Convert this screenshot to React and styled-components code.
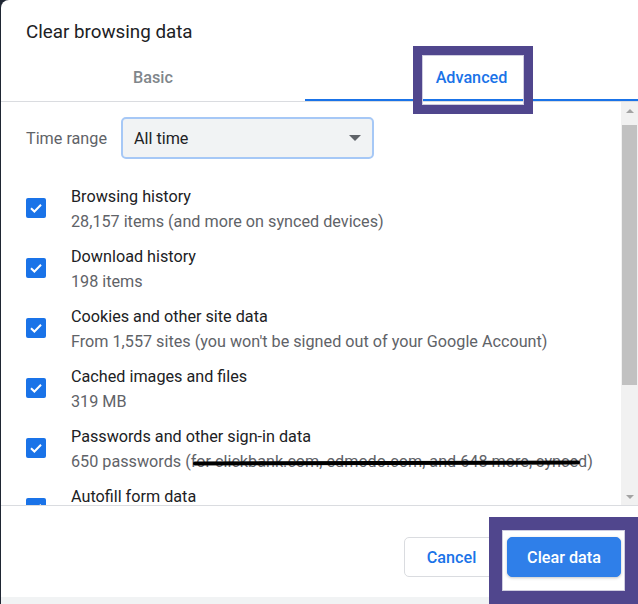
import React from 'react';
import styled, {createGlobalStyle} from 'styled-components';

const Global = createGlobalStyle`
  html, body { margin: 0; padding: 0; background: #1f2633; }
  body { font-family: Roboto, "Liberation Sans", sans-serif; }
`

const Page = styled.div`
  position: relative;
  width: 638px;
  height: 604px;
  overflow: hidden;
`

const Dialog = styled.div`
  display: flex;
  flex-direction: column;
  height: 604px;
  margin-left: 1px;
  background: #fff;
  border-radius: 8px 0 0 0;
`

const Title = styled.h1`
  margin: 0;
  padding: 20px 0 0 25px;
  height: 24px;
  line-height: 24px;
  font-size: 18.8px;
  font-weight: 400;
  color: #202124;
`

const TabBar = styled.div`
  display: flex;
  margin-top: 12px;
  border-bottom: 1px solid #dadce0;
`

const Tab = styled.div`
  flex: ${p => (p.$active ? 1 : '0 0 304px')};
  height: 43px;
  display: flex;
  align-items: center;
  justify-content: center;
  font-size: 16.2px;
  font-weight: 500;
  color: ${p => (p.$active ? '#1a73e8' : '#80868b')};
  border-bottom: 2px solid ${p => (p.$active ? '#1a73e8' : 'transparent')};
`

const Content = styled.div`
  flex: 1;
  min-height: 0;
  display: flex;
`

const List = styled.div`
  flex: 1;
  overflow: hidden;
  padding: 15px 0 0 25px;
`

const TimeRow = styled.div`
  display: flex;
  align-items: center;
  gap: 14px;
  margin-bottom: 24px;
`

const Label = styled.span`
  font-size: 16.2px;
  color: #5f6368;
`

const Select = styled.div`
  box-sizing: border-box;
  width: 253px;
  height: 42px;
  display: flex;
  align-items: center;
  justify-content: space-between;
  padding: 0 11px 0 11px;
  background: #f1f3f4;
  border: 2px solid #a6c8f6;
  border-radius: 5px;
  font-size: 16.2px;
  color: #202124;
`

const Caret = styled.span`
  width: 0;
  height: 0;
  border-left: 6px solid transparent;
  border-right: 6px solid transparent;
  border-top: 6px solid #5f6368;
`

const Rows = styled.div`
  display: flex;
  flex-direction: column;
  gap: 10px;
`

const Row = styled.div`
  display: flex;
  align-items: center;
  gap: 25px;
`

const Box = styled.div`
  flex: none;
  width: 20px;
  height: 20px;
  border-radius: 2px;
  background: #1a73e8;
  display: flex;
  align-items: center;
  justify-content: center;
`

const Texts = styled.div`
  display: flex;
  flex-direction: column;
  height: 50px;
  padding-top: 1px;
  box-sizing: border-box;
`

const ItemTitle = styled.div`
  flex: none;
  font-size: 16.2px;
  line-height: 25px;
  color: #202124;
  white-space: nowrap;
`

const ItemSub = styled.div`
  flex: none;
  font-size: 16.2px;
  line-height: 25px;
  color: #5f6368;
  white-space: nowrap;
`

const Scribble = styled.span`
  position: relative;
  &::after {
    content: '';
    position: absolute;
    left: 2px;
    right: -2px;
    top: 58%;
    height: 4px;
    margin-top: -2px;
    border-radius: 2px;
    background: #000;
    transform: rotate(-0.15deg);
  }
`

const Scrollbar = styled.div`
  width: 17px;
  display: flex;
  flex-direction: column;
  background: #f1f1f1;
`

const ArrowBtn = styled.div`
  height: 17px;
  display: flex;
  align-items: center;
  justify-content: center;
  &::after {
    content: '';
    border-left: 4px solid transparent;
    border-right: 4px solid transparent;
    ${p => (p.$down ? 'border-top: 4px solid #a3a3a3;' : 'border-bottom: 4px solid #a3a3a3;')}
  }
`

const Track = styled.div`
  flex: 1;
`

const Thumb = styled.div`
  margin: 6px 1px 0 1px;
  height: 260px;
  background: #c1c1c1;
`

const Footer = styled.div`
  display: flex;
  justify-content: flex-end;
  gap: 8px;
  padding: 31px 17px 20px 0;
  border-top: 1px solid #dadce0;
`

const Button = styled.button`
  box-sizing: border-box;
  width: ${p => p.$w}px;
  height: 40px;
  border-radius: 5px;
  font-family: Roboto, "Liberation Sans", sans-serif;
  font-size: 16.2px;
  font-weight: 500;
  border: 1px solid ${p => (p.$primary ? '#2f7fe9' : '#dadce0')};
  background: ${p => (p.$primary ? '#2f7fe9' : '#fff')};
  color: ${p => (p.$primary ? '#fff' : '#1a73e8')};
  box-shadow: ${p => (p.$primary ? '0 1px 3px rgba(60,64,67,0.3)' : 'none')};
`

const Strip = styled.div`
  height: 7px;
  background: #f1f3f4;
`

const Highlight = styled.div`
  position: absolute;
  box-sizing: border-box;
  border: ${p => p.$b}px solid #50468d;
  box-shadow: inset 0 0 0 1px #cfcde0;
`

const Check = () => (
  <Box>
    <svg width="14" height="14" viewBox="0 0 14 14">
      <path d="M2 7.2 L5.4 10.5 L12 3.8" fill="none" stroke="#fff" strokeWidth="2" />
    </svg>
  </Box>
)

const items = [
  ['Browsing history', '28,157 items (and more on synced devices)'],
  ['Download history', '198 items'],
  ['Cookies and other site data', "From 1,557 sites (you won't be signed out of your Google Account)"],
  ['Cached images and files', '319 MB'],
  ['Passwords and other sign-in data', 'pw'],
  ['Autofill form data', null],
]

export default function App() {
  return (
    <Page>
      <Global />
      <Dialog>
        <Title>Clear browsing data</Title>
        <TabBar>
          <Tab>Basic</Tab>
          <Tab $active>Advanced</Tab>
        </TabBar>
        <Content>
          <List>
            <TimeRow>
              <Label>Time range</Label>
              <Select>
                All time
                <Caret />
              </Select>
            </TimeRow>
            <Rows>
              {items.map(([t, s], idx) => (
                <Row key={idx}>
                  <Check />
                  <Texts>
                    <ItemTitle>{t}</ItemTitle>
                    {s === 'pw' ? (
                      <ItemSub>650 passwords (<Scribble>for clickbank.com, edmodo.com, and 648 more, synce</Scribble>d)</ItemSub>
                    ) : s ? (
                      <ItemSub>{s}</ItemSub>
                    ) : null}
                  </Texts>
                </Row>
              ))}
            </Rows>
          </List>
          <Scrollbar>
            <ArrowBtn />
            <Track>
              <Thumb />
            </Track>
            <ArrowBtn $down />
          </Scrollbar>
        </Content>
        <Footer>
          <Button $w={95}>Cancel</Button>
          <Button $w={114} $primary>Clear data</Button>
        </Footer>
        <Strip />
      </Dialog>
      <Highlight $b={9} style={{left: 413, top: 46, width: 120, height: 68}} />
      <Highlight $b={13} style={{left: 489, top: 517, width: 149, height: 87}} />
    </Page>
  );
}
